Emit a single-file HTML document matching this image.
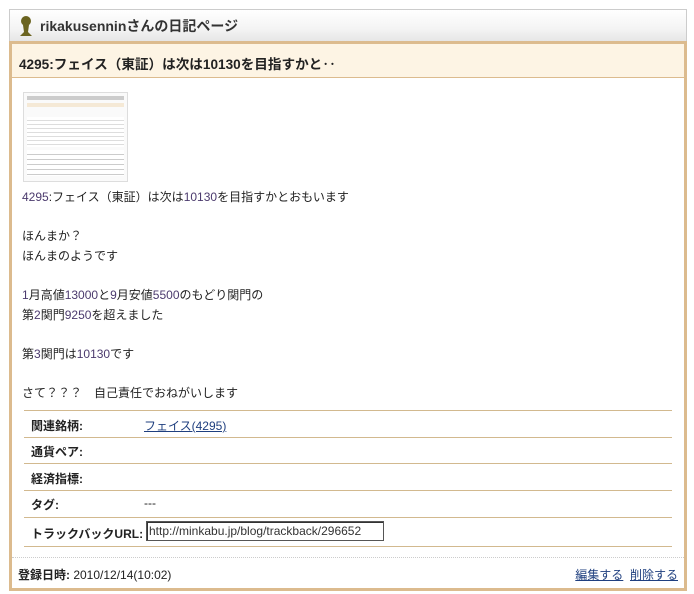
<!DOCTYPE html>
<html><head><meta charset="utf-8"><style>
body{margin:0;background:#fff;font-family:"Liberation Sans","Noto Sans CJK JP",sans-serif;width:694px;height:594px;position:relative;overflow:hidden;color:#222}
.hdr{position:absolute;left:9px;top:9px;width:676px;height:31px;border:1px solid #ccc;border-bottom:1px solid #d6d6d6;background:linear-gradient(#fff,#f4f4f4 60%,#e6e6e6)}
.hdr span{position:absolute;left:30px;top:6px;font-size:14px;font-weight:bold;color:#333}
.frame{position:absolute;left:9px;top:41px;width:672px;height:544px;border:3px solid #dcbb8e}
.title{position:absolute;left:0;top:0;width:672px;height:33px;background:#fdf4e4;border-bottom:1px solid #dcbb8e}
.title span{position:absolute;left:7px;top:9px;font-size:13.6px;font-weight:bold;color:#222}
.thumb{position:absolute;left:11px;top:48px;width:103px;height:88px;border:1px solid #ddd;background:#fafafa}
.body{position:absolute;left:10px;top:144px;font-size:12px;line-height:19.6px;color:#222}
.n{color:#4b3a6d}
.row{position:absolute;left:12px;width:648px;border-top:1px solid #d2b98f;font-size:12px}
.row b{position:absolute;left:7px;color:#222}
.row .v{position:absolute;left:120px}
.foot{position:absolute;left:0;top:513px;width:672px;border-top:1px dotted #ccc}
a{color:#1f3f7f;text-decoration:underline}
</style></head><body>
<div class="hdr">
<svg style="position:absolute;left:8px;top:5px" width="16" height="22" viewBox="0 0 16 22"><circle cx="8" cy="6" r="5" fill="#6b6420"/><path d="M5 10 L11 10 L10 17 L14 21 L2 21 L6 17 Z" fill="#6b6420"/></svg>
<span>rikakusenninさんの日記ページ</span></div>
<div class="frame">
<div class="title"><span>4295:フェイス（東証）は次は10130を目指すかと‥</span></div>
<div class="thumb">
<div style="margin:3px;height:4px;background:#ccc"></div>
<div style="margin:3px;height:4px;background:#f5e9d6"></div>
<div style="margin:10px 3px 3px;height:30px;background:repeating-linear-gradient(#fff 0 3px,#ddd 3px 4px)"></div>
<div style="margin:3px;height:26px;background:repeating-linear-gradient(#fff 0 4px,#ccc 4px 5px)"></div>
</div>
<div class="body">
<span class="n">4295</span>:フェイス（東証）は次は<span class="n">10130</span>を目指すかとおもいます<br><br>
ほんまか？<br>ほんまのようです<br><br>
<span class="n">1</span>月高値<span class="n">13000</span>と<span class="n">9</span>月安値<span class="n">5500</span>のもどり関門の<br>
第<span class="n">2</span>関門<span class="n">9250</span>を超えました<br><br>
第<span class="n">3</span>関門は<span class="n">10130</span>です<br><br>
さて？？？　自己責任でおねがいします
</div>
<div class="row" style="top:366px;height:26px"><b style="top:6px">関連銘柄:</b><a class="v" style="top:6px">フェイス(4295)</a></div>
<div class="row" style="top:393px;height:26px"><b style="top:5px">通貨ペア:</b></div>
<div class="row" style="top:419px;height:26px"><b style="top:6px">経済指標:</b></div>
<div class="row" style="top:446px;height:26px"><b style="top:5px">タグ:</b><span class="v" style="top:5px">---</span></div>
<div class="row" style="top:473px;height:28px;border-bottom:1px solid #d2b98f"><b style="top:7px">トラックバックURL:</b><span class="v" style="top:3px;left:122px;border:1px solid #555;box-shadow:inset 1px 1px 0 #333;padding:2px 2px;width:232px;white-space:nowrap;overflow:hidden;color:#333">http://minkabu.jp/blog/trackback/296652</span></div>
<div class="foot"></div>
<div style="position:absolute;left:6px;top:522px;font-size:12px"><b>登録日時:</b> 2010/12/14(10:02)</div>
<div style="position:absolute;right:6px;top:522px;font-size:12px"><a>編集する</a>&nbsp; <a>削除する</a></div>
</div>
</body></html>
